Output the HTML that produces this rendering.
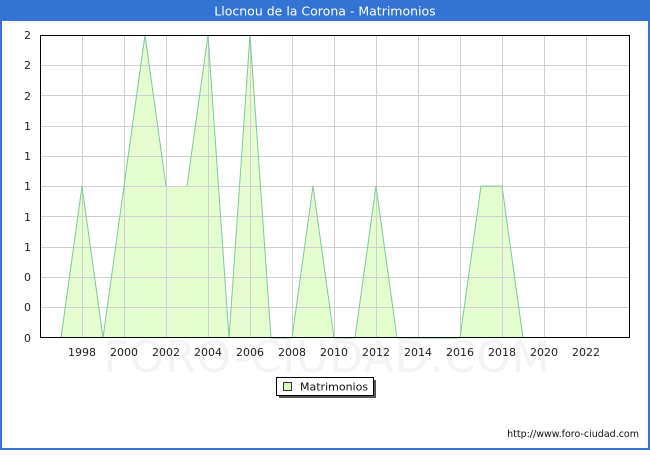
<!DOCTYPE html>
<html><head><meta charset="utf-8"><style>
html,body{margin:0;padding:0;background:#fff;}
body{width:650px;height:450px;overflow:hidden;}
</style></head><body>
<svg width="650" height="450" xmlns="http://www.w3.org/2000/svg" font-family="'DejaVu Sans','Liberation Sans',sans-serif">
<rect x="0" y="0" width="650" height="450" fill="#fff"/>
<rect x="1" y="1" width="648" height="448" fill="none" stroke="#3273d4" stroke-width="2"/>
<rect x="0" y="0" width="650" height="21" fill="#3273d4"/>
<text x="325" y="15.5" text-anchor="middle" font-size="12.5" fill="#fff">Llocnou de la Corona - Matrimonios</text>
<text x="327" y="372" text-anchor="middle" font-size="44" fill="#f4f4f4" letter-spacing="1">FORO-CIUDAD.COM</text>
<polygon fill="#e4fdcf" points="61,338 82,186 103,338 124,186 145,35 166,186 187,186 208,35 229,338 250,35 271,338 292,338 313,186 334,338 355,338 376,186 397,338 460,338 481,186 502,186 523,338"/>
<polyline fill="none" stroke="#7fc89a" stroke-width="1" points="166,186.5 187,186.5"/>
<polyline fill="none" stroke="#7fc89a" stroke-width="1" points="523,337.5 586,337.5"/>
<g stroke="#d0d0d0" stroke-width="1">
<line x1="82.5" y1="35" x2="82.5" y2="338"/><line x1="124.5" y1="35" x2="124.5" y2="338"/><line x1="166.5" y1="35" x2="166.5" y2="338"/><line x1="208.5" y1="35" x2="208.5" y2="338"/><line x1="250.5" y1="35" x2="250.5" y2="338"/><line x1="292.5" y1="35" x2="292.5" y2="338"/><line x1="334.5" y1="35" x2="334.5" y2="338"/><line x1="376.5" y1="35" x2="376.5" y2="338"/><line x1="418.5" y1="35" x2="418.5" y2="338"/><line x1="460.5" y1="35" x2="460.5" y2="338"/><line x1="502.5" y1="35" x2="502.5" y2="338"/><line x1="544.5" y1="35" x2="544.5" y2="338"/><line x1="586.5" y1="35" x2="586.5" y2="338"/>
<line x1="40" y1="65.5" x2="630" y2="65.5"/><line x1="40" y1="95.5" x2="630" y2="95.5"/><line x1="40" y1="126.5" x2="630" y2="126.5"/><line x1="40" y1="156.5" x2="630" y2="156.5"/><line x1="40" y1="186.5" x2="630" y2="186.5"/><line x1="40" y1="216.5" x2="630" y2="216.5"/><line x1="40" y1="247.5" x2="630" y2="247.5"/><line x1="40" y1="277.5" x2="630" y2="277.5"/><line x1="40" y1="307.5" x2="630" y2="307.5"/>
</g>
<polyline fill="none" stroke="#7fc89a" stroke-width="1" points="61,338 82,186 103,338 124,186 145,35 166,186"/>
<polyline fill="none" stroke="#7fc89a" stroke-width="1" points="187,186 208,35 229,338 250,35 271,338 292,338 313,186 334,338 355,338 376,186 397,338 460,338 481,186 502,186 523,338"/>
<rect x="40.5" y="35.5" width="589" height="302" fill="none" stroke="#000" stroke-width="1"/>
<g font-size="11" fill="#222" text-anchor="end">
<text x="31" y="39">2</text><text x="31" y="69">2</text><text x="31" y="100">2</text><text x="31" y="130">1</text><text x="31" y="160">1</text><text x="31" y="190">1</text><text x="31" y="221">1</text><text x="31" y="251">1</text><text x="31" y="281">0</text><text x="31" y="311">0</text><text x="31" y="342">0</text>
</g>
<g font-size="11" fill="#222" text-anchor="middle">
<text x="82" y="356">1998</text><text x="124" y="356">2000</text><text x="166" y="356">2002</text><text x="208" y="356">2004</text><text x="250" y="356">2006</text><text x="292" y="356">2008</text><text x="334" y="356">2010</text><text x="376" y="356">2012</text><text x="418" y="356">2014</text><text x="460" y="356">2016</text><text x="502" y="356">2018</text><text x="544" y="356">2020</text><text x="586" y="356">2022</text>
</g>
<rect x="279" y="380" width="97" height="18" fill="#555"/>
<rect x="276.5" y="377.5" width="97" height="18" fill="#fff" stroke="#000" stroke-width="1"/>
<rect x="283.5" y="382.5" width="8" height="8" fill="#d7fbb8" stroke="#333" stroke-width="1"/>
<text x="300" y="390.5" font-size="11" fill="#111">Matrimonios</text>
<text x="639" y="437" text-anchor="end" font-size="9.5" fill="#111">http://www.foro-ciudad.com</text>
</svg>
</body></html>
